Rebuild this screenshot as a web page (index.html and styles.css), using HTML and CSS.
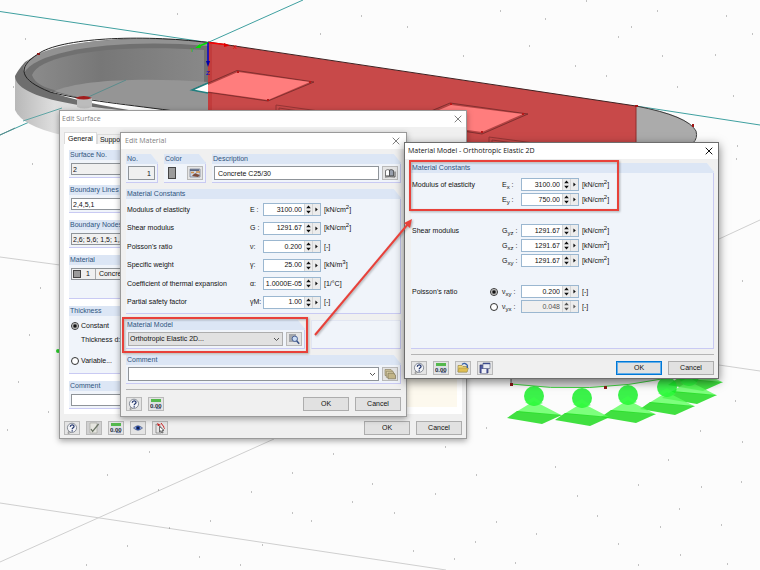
FILE: index.html
```html
<!DOCTYPE html>
<html lang="en">
<head>
    <meta charset="UTF-8">
    <meta name="viewport" content="width=device-width, initial-scale=1.0">
    <title>Material Model - Orthotropic Elastic 2D</title>
    <link rel="stylesheet" href="styles.css">
</head>
<body>
    <!-- shared icons -->
    <svg class="defs" aria-hidden="true">
        <defs>
            <symbol id="i-close" viewBox="0 0 8 8"><path d="M.7.7l6.6 6.6M7.3.7L.7 7.3" fill="none" stroke="currentColor"/></symbol>
            <symbol id="i-help" viewBox="0 0 12 12">
                <path d="M2.6 9.2L2 11.4l2.8-1" fill="#fff" stroke="#555" stroke-width=".6"/>
                <circle cx="6" cy="5.8" r="4.6" fill="#f4f5f8" stroke="#7d838e" stroke-width=".9"/>
                <path d="M4.3 4.7C4.3 2.3 8 2.4 8 4.5 8 5.9 6.2 5.8 6.2 7.3M6.2 8.2v1.2" fill="none" stroke="#26386e" stroke-width="1.3"/>
            </symbol>
            <symbol id="i-units" viewBox="0 0 12 12">
                <path d="M1 1h10v3H1z" fill="#55b84d"/>
                <path d="M1 4h10v7H1z" fill="#dcdfe4"/>
                <text x="0" y="9.6" font-size="6" font-weight="bold" fill="#222c3a">0.00</text>
                <path d="M6 10.6h5" stroke="#5a6a9a" stroke-width=".8"/>
            </symbol>
            <symbol id="i-edit" viewBox="0 0 12 12">
                <path d="M2 1h7v10H2z" fill="#e6e6e0" stroke="#a2a29a" stroke-width=".6"/>
                <path d="M3 7l1.6 2.4L10.6 2" fill="none" stroke="#6c7566" stroke-width="1.3"/>
            </symbol>
            <symbol id="i-eye" viewBox="0 0 12 12">
                <path d="M1.5 6Q6 1.6 10.500 6 6 10.4 1.5 6z" fill="#8ea3d4" stroke="#4a5a80" stroke-width=".7"/>
                <circle cx="6" cy="6" r="2.2" fill="#27459a"/><circle cx="6" cy="6" r="1.1" fill="#0b1430"/>
            </symbol>
            <symbol id="i-pick" viewBox="0 0 12 12">
                <path d="M2 2v9h5V5z" fill="#e6e6e6" stroke="#777" stroke-width=".7"/>
                <path d="M3 1l4 2-3 1z" fill="#c22"/>
                <path d="M5.5 4.5V10l1.4-1.3 1 2.3 1.2-.5-1-2.2h1.9z" fill="#fff" stroke="#333" stroke-width=".7"/>
                <path d="M7 1l3 4M9.5 5.5l1.5 1" stroke="#c22"/>
            </symbol>
            <symbol id="i-palette" viewBox="0 0 12 12">
                <path d="M1 2h10v8H1z" fill="#cdd5e2" stroke="#70798c" stroke-width=".7"/>
                <path d="M1 2.2h9v1.8H1z" fill="#5a6682"/>
                <path d="M2 5.5h3M7 5h4" stroke="#d0914c" stroke-width="1.4"/>
                <path d="M3 9q3-4 5-2l3 1-2 2z" fill="#7d4c3a"/>
            </symbol>
            <symbol id="i-book" viewBox="0 0 12 12">
                <path d="M1.5 9V3.5q2-1.5 4-.5v6q-2-.7-4 0z" fill="#fdfdfd" stroke="#555" stroke-width=".8"/>
                <path d="M5.5 3q2-1 4 .5V9q-2-.7-4 0z" fill="#9aa1ae" stroke="#444" stroke-width=".8"/>
                <path d="M1 10l4.500-.3 5.500.3V4.500" fill="none" stroke="#555"/>
            </symbol>
            <symbol id="i-lens" viewBox="0 0 12 12">
                <path d="M1 1h7v8H1z" fill="#a3a6ab"/>
                <circle cx="6.8" cy="5.8" r="2.7" fill="#c9dcf5" stroke="#4a6296"/>
                <path d="M8.6 7.8l2.6 3" stroke="#3b5488" stroke-width="1.6"/>
            </symbol>
            <symbol id="i-stack" viewBox="0 0 12 12">
                <path d="M1 1.5h6l2 2v4H1z" fill="#cfc39a" stroke="#83795a" stroke-width=".6"/>
                <path d="M2.3 3.3h6l2 2v4h-8z" fill="#d9cea6" stroke="#83795a" stroke-width=".6"/>
                <path d="M4 5.2h5.5l2 2v3.6H4z" fill="#c2b588" stroke="#6f664a" stroke-width=".6"/>
            </symbol>
            <symbol id="i-open" viewBox="0 0 12 12">
                <path d="M1 10V3.5h4l1 1h4V10z" fill="#f1d876" stroke="#9a8848" stroke-width=".7"/>
                <path d="M2 6h9.4L10 10H1z" fill="#e0bf52" stroke="#9a8848" stroke-width=".5"/>
                <path d="M5 2.6Q8 0 10.4 3.4V6" fill="none" stroke="#3963a8" stroke-width="1.3"/>
            </symbol>
            <symbol id="i-save" viewBox="0 0 12 12">
                <path d="M1 3h8v8H1z" fill="#4f5aa0" stroke="#2e3568" stroke-width=".7"/>
                <path d="M2.6 7h4.8v4H2.6z" fill="#f0f0f5"/>
                <path d="M4 1h7v5.5H4z" fill="#e8ebf3" stroke="#66708c" stroke-width=".7"/>
                <path d="M4 1.6h7" stroke="#3b4a8c" stroke-width="1.2"/>
            </symbol>
            <symbol id="i-spin" viewBox="0 0 7 11"><path d="M3.5 1.4L5.8 4.2H1.2zM3.5 9.6L5.8 6.8H1.2z" fill="currentColor"/></symbol>
            <symbol id="i-more" viewBox="0 0 7 11"><path d="M2.4 3.400L4.800 5.500 2.400 7.600z" fill="currentColor"/></symbol>
            <symbol id="support" viewBox="-30 -12 60 42" overflow="visible">
                <path d="M0 5L-18 16 28 19.5z" fill="#5cff5c" opacity=".8"/>
                <path d="M-27 22L-17 15 28 19 8 28z" fill="#1edb1e" opacity=".85"/>
                <circle r="10" fill="#19f02a" opacity=".85"/>
                <path d="M-9 6L0 1l9 6Q0 13-9 6z" fill="#3bff46" opacity=".6"/>
            </symbol>
        </defs>
    </svg>

    <main class="desktop">
        <!-- 3D model view -->
        <svg class="scene" viewBox="0 0 760 570" preserveAspectRatio="xMinYMin slice" role="img" aria-label="Tank model">
            <defs>
                <linearGradient id="wall" x1="0" x2="1"><stop offset="0" stop-color="#b8b8b8"/><stop offset=".2" stop-color="#dedede"/><stop offset="1" stop-color="#c8c8c8"/></linearGradient>
                <linearGradient id="inner" x1="0" x2="1"><stop offset="0" stop-color="#8b8b8b"/><stop offset=".4" stop-color="#777"/><stop offset="1" stop-color="#888"/></linearGradient>
            </defs>
            <g stroke="#cfcfcf" fill="none">
                <path d="M0 257l60 8M0 503l446 67M0 562l274-123M719 239l41-19M719 365l41 6"/>
            </g>
            <path d="M177 14h1M25 39h1M32 164h1M40 288h1M29 335h1M48 412h1M7 430h1M18 382h1M13 87h1M361 16h1M320 34h1M407 27h1M463 56h1M500 11h1M545 19h1M529 46h1M575 66h1M586 1h1M631 27h1M677 87h1M618 37h1M606 76h1M726 16h1M657 11h1M715 55h1M752 34h1M662 56h1M733 96h1M737 146h1M736 159h1M742 281h1M735 401h1M149 452h1M158 490h1M107 475h1M292 473h1M445 447h1M333 454h1M251 492h1M210 521h1M169 528h1M127 546h1M199 557h1M86 565h1M262 545h1M240 565h1M352 502h1M311 521h1M292 513h1M476 475h1M435 494h1M394 513h1M372 484h1M496 522h1M475 542h1M536 534h1M413 551h1M454 559h1M515 563h1M555 467h1M577 496h1M597 516h1M638 485h1M679 509h1M701 487h1M721 525h1M742 442h1M741 482h1M618 544h1M660 527h1M638 565h1M680 555h1M727 564h1M668 460h1M700 431h1M486 428h1" stroke="#888"/>
            <path d="M0 11.5L208 42.5 303 0M208 42.5L0 135M636 106l124 19" fill="none" stroke="#3fa0a0"/>

            <!-- tank -->
            <path d="M15 76V110Q22 126 62 135L210 135V100z" fill="url(#wall)"/>
            <path d="M15 76Q18 70 25 62C60 40 130 34 208 42V112H150C80 108 16 98 15 76z" fill="#6e6e6e"/>
            <path d="M23 70C27 42 122 34 208 42V50C140 41 55 46 28 76z" fill="#929292"/>
            <path d="M24 73C36 50 120 38 208 46V90L60 93Q28 86 24 73z" fill="#707070"/>
            <path d="M32 75C40 55 110 44 204 50V86L60 91Q36 87 32 75z" fill="url(#inner)"/>
            <path d="M54 91C80 80 140 77 208 82V113H170Q100 104 54 91z" fill="#959595"/>
            <path d="M48 91L75 97Q130 105 185 113H148Q80 103 48 91z" fill="#fff"/>
            <path d="M0 135L15 128M86 98l40-18" stroke="#5b8c8c"/>
            <path d="M23 121L62 108" stroke="#5fa5a5"/>
            <path d="M208 42.5C140 34 60 38 38 54 16 68 20 80 50 92 80 100 130 105 182 112" fill="none" stroke="#222"/>
            <path d="M77 98v9q7 3 15 0v-9z" fill="#bcbcbc"/>
            <path d="M75 98q9-4 17 0-8 3-17 0z" fill="#a11d1d"/>
            <path d="M37 53h3v2h-3z" fill="#8c1818"/>

            <!-- selected surface -->
            <path d="M208 42L636 106V160H208z" fill="#c84949"/>
            <path d="M208 42L212 43V111H208z" fill="#c23c3c"/>
            <path d="M208 42L636 106" stroke="#3f2222"/>
            <path d="M636 106Q690 115 696 132 697 138 693 143H636z" fill="#ababab"/>
            <path d="M636 106Q688 116 696 131 698 138 693 143" fill="none" stroke="#3c3c3c"/>
            <path d="M636 106v37" stroke="#8e2f2f"/>
            <path d="M635 105h3v2h-3zM692 124h2v3h-2z" fill="#a01515"/>
            <path d="M192 90L237 70.5 314 82 268 101z" fill="#b54444" stroke="#742a2a" stroke-width=".8"/>
            <path d="M208 85L238 72 310 82 268 100 208 91.5z" fill="#ff7d7d"/>
            <path d="M208 83L192 90l16 3" fill="#fff" stroke="#208080" stroke-width="1.5"/>
            <path d="M405 122L450 103 528 114 482 134z" fill="#b54444" stroke="#742a2a" stroke-width=".8"/>
            <path d="M410 122L451 105 523 114 482 132z" fill="#ff7d7d"/>
            <path d="M237 71h2v2h-2zM309 81h2v2h-2zM267 99h2v2h-2zM450 103h2v2h-2zM522 113h2v2h-2zM481 131h2v2h-2z" fill="#b81818"/>
            <path d="M276 111v-6l50 7M279 111v-3l26 4M489 143v-6l45 6M492 143v-3l22 3" fill="none" stroke="#963636"/>

            <!-- axes -->
            <path d="M208 42.5l17 2" stroke="red" stroke-width="1.5"/><path d="M224 43l6 2.5-6 1.5z" fill="#d00"/>
            <path d="M208 42.5l-10 4" stroke="#0d0" stroke-width="1.5"/><path d="M195 48l5-4 1 4z" fill="#0d0"/>
            <path d="M208 42.5v20" stroke="#00c" stroke-width="1.5"/><path d="M206 61h4l-2 6z" fill="#00a"/>
            <g font-size="6"><text x="233" y="49" fill="#e00">X</text><text x="190" y="52" fill="#0c0">Y</text><text x="206" y="75" fill="#00c">Z</text></g>

            <!-- far end and supports -->
            <path d="M511 370V384Q590 394 668 378z" fill="#dadada"/>
            <path d="M511 384Q590 394 668 378" fill="none" stroke="#3fd23f"/>
            <path d="M511 378v6" stroke="#555"/>
            <path d="M510 383h3v3h-3zM604 386h3v3h-3z" fill="#8c1818"/>
            <use href="#support" x="665" y="351" width="60" height="42"/>
            <use href="#support" x="659" y="364" width="60" height="42"/>
            <use href="#support" x="637" y="375" width="60" height="42"/>
            <use href="#support" x="598" y="383" width="60" height="42"/>
            <use href="#support" x="552" y="386" width="60" height="42"/>
            <use href="#support" x="504" y="384" width="60" height="42"/>
            <circle cx="58" cy="351" r="2" fill="#2ad42a"/>
        </svg>

        <section class="window surface" aria-label="Edit Surface">
            <header class="titlebar inactive">
                <h2>Edit Surface</h2>
                <button type="button" aria-label="Close"><svg><use href="#i-close"/></svg></button>
            </header>
            <div class="content">
                <div class="tabs" role="tablist">
                    <button type="button" role="tab" class="tab active" aria-selected="true">General</button>
                    <button type="button" role="tab" class="tab" aria-selected="false">Support</button>
                </div>
                <div class="tab-panel">
                    <div class="column">
                        <div class="group">
                            <h3><label for="surface-no">Surface No.</label></h3>
                            <div class="group-body"><input class="box readonly" id="surface-no" value="2" readonly></div>
                        </div>
                        <div class="group">
                            <h3><label for="lines">Boundary Lines No.</label></h3>
                            <div class="group-body"><input class="box" id="lines" value="2,4,5,1"></div>
                        </div>
                        <div class="group">
                            <h3><label for="nodes">Boundary Nodes No.</label></h3>
                            <div class="group-body"><input class="box readonly" id="nodes" value="2,6; 5,6; 1,5; 1,2" readonly></div>
                        </div>
                        <div class="group material">
                            <h3>Material</h3>
                            <div class="group-body">
                                <div class="box readonly material-box"><span class="swatch"></span><span>1</span><span class="mat-name">Concrete C25/30</span></div>
                            </div>
                        </div>
                        <div class="group thickness">
                            <h3>Thickness</h3>
                            <div class="group-body">
                                <label class="choice"><input type="radio" name="thickness" checked>Constant</label>
                                <span class="indent">Thickness d:</span>
                                <label class="choice"><input type="radio" name="thickness">Variable...</label>
                            </div>
                        </div>
                        <div class="group">
                            <h3><label for="surface-comment">Comment</label></h3>
                            <div class="group-body"><input class="box" id="surface-comment"></div>
                        </div>
                    </div>
                    <div class="preview"></div>
                </div>
                <footer class="toolbar">
                    <button type="button" class="icon-btn" aria-label="Help"><svg><use href="#i-help"/></svg></button>
                    <button type="button" class="icon-btn pressed" aria-label="Edit"><svg><use href="#i-edit"/></svg></button>
                    <button type="button" class="icon-btn" aria-label="Units"><svg><use href="#i-units"/></svg></button>
                    <button type="button" class="icon-btn" aria-label="View"><svg><use href="#i-eye"/></svg></button>
                    <button type="button" class="icon-btn" aria-label="Pick"><svg><use href="#i-pick"/></svg></button>
                    <span class="spacer"></span>
                    <button type="button" class="btn">OK</button>
                    <button type="button" class="btn">Cancel</button>
                </footer>
            </div>
        </section>

        <section class="window edit-material" aria-label="Edit Material">
            <header class="titlebar inactive">
                <h2>Edit Material</h2>
                <button type="button" aria-label="Close"><svg><use href="#i-close"/></svg></button>
            </header>
            <div class="content">
                <div class="group-row">
                    <div class="group no">
                        <h3><label for="mat-no">No.</label></h3>
                        <div class="group-body"><input class="box readonly right" id="mat-no" value="1" readonly></div>
                    </div>
                    <div class="group color">
                        <h3>Color</h3>
                        <div class="group-body"><span class="swatch tall"></span><button type="button" class="icon-btn" aria-label="Choose color"><svg><use href="#i-palette"/></svg></button></div>
                    </div>
                    <div class="group grow">
                        <h3><label for="desc">Description</label></h3>
                        <div class="group-body"><input class="box" id="desc" value="Concrete C25/30"><button type="button" class="icon-btn" aria-label="Library"><svg><use href="#i-book"/></svg></button></div>
                    </div>
                </div>

                <div class="group constants">
                    <h3>Material Constants</h3>
                    <div class="rows">
                        <div class="row">
                            <label for="e">Modulus of elasticity</label><span>E :</span>
                            <div class="spinner"><input id="e" value="3100.00"><button type="button" aria-label="Step"><svg><use href="#i-spin"/></svg></button><button type="button" aria-label="More"><svg><use href="#i-more"/></svg></button></div>
                            <span>[kN/cm<sup>2</sup>]</span>
                        </div>
                        <div class="row">
                            <label for="g">Shear modulus</label><span>G :</span>
                            <div class="spinner"><input id="g" value="1291.67"><button type="button" aria-label="Step"><svg><use href="#i-spin"/></svg></button><button type="button" aria-label="More"><svg><use href="#i-more"/></svg></button></div>
                            <span>[kN/cm<sup>2</sup>]</span>
                        </div>
                        <div class="row">
                            <label for="nu">Poisson's ratio</label><span>ν:</span>
                            <div class="spinner"><input id="nu" value="0.200"><button type="button" aria-label="Step"><svg><use href="#i-spin"/></svg></button><button type="button" aria-label="More"><svg><use href="#i-more"/></svg></button></div>
                            <span>[-]</span>
                        </div>
                        <div class="row">
                            <label for="gamma">Specific weight</label><span>γ:</span>
                            <div class="spinner"><input id="gamma" value="25.00"><button type="button" aria-label="Step"><svg><use href="#i-spin"/></svg></button><button type="button" aria-label="More"><svg><use href="#i-more"/></svg></button></div>
                            <span>[kN/m<sup>3</sup>]</span>
                        </div>
                        <div class="row">
                            <label for="alpha">Coefficient of thermal expansion</label><span>α:</span>
                            <div class="spinner"><input id="alpha" value="1.0000E-05"><button type="button" aria-label="Step"><svg><use href="#i-spin"/></svg></button><button type="button" aria-label="More"><svg><use href="#i-more"/></svg></button></div>
                            <span>[1/°C]</span>
                        </div>
                        <div class="row">
                            <label for="gamma-m">Partial safety factor</label><span>γM:</span>
                            <div class="spinner"><input id="gamma-m" value="1.00"><button type="button" aria-label="Step"><svg><use href="#i-spin"/></svg></button><button type="button" aria-label="More"><svg><use href="#i-more"/></svg></button></div>
                            <span>[-]</span>
                        </div>
                    </div>
                </div>

                <div class="group-row">
                    <div class="group model-group">
                        <h3><label for="model">Material Model</label></h3>
                        <div class="group-body">
                            <select class="box gray" id="model"><option>Orthotropic Elastic 2D...</option></select>
                            <button type="button" class="icon-btn" aria-label="Details"><svg><use href="#i-lens"/></svg></button>
                        </div>
                    </div>
                    <div class="group plain grow"></div>
                </div>

                <div class="group">
                    <h3><label for="comment">Comment</label></h3>
                    <div class="group-body">
                        <select class="box" id="comment"><option></option></select>
                        <button type="button" class="icon-btn" aria-label="Comments"><svg><use href="#i-stack"/></svg></button>
                    </div>
                </div>

                <footer class="toolbar ruled">
                    <button type="button" class="icon-btn" aria-label="Help"><svg><use href="#i-help"/></svg></button>
                    <button type="button" class="icon-btn" aria-label="Units"><svg><use href="#i-units"/></svg></button>
                    <span class="spacer"></span>
                    <button type="button" class="btn">OK</button>
                    <button type="button" class="btn">Cancel</button>
                </footer>
            </div>
        </section>

        <section class="window material-model" aria-label="Material Model">
            <header class="titlebar">
                <h2>Material Model - Orthotropic Elastic 2D</h2>
                <button type="button" aria-label="Close"><svg><use href="#i-close"/></svg></button>
            </header>
            <div class="content">
                <div class="group ortho">
                    <h3>Material Constants</h3>
                    <div class="sets">
                        <div class="set">
                            <div class="row">
                                <span>Modulus of elasticity</span><span></span><label for="ex">E<sub>x</sub> :</label>
                                <div class="spinner"><input id="ex" value="3100.00"><button type="button" aria-label="Step"><svg><use href="#i-spin"/></svg></button><button type="button" aria-label="More"><svg><use href="#i-more"/></svg></button></div>
                                <span>[kN/cm<sup>2</sup>]</span>
                            </div>
                            <div class="row">
                                <span></span><span></span><label for="ey">E<sub>y</sub> :</label>
                                <div class="spinner"><input id="ey" value="750.00"><button type="button" aria-label="Step"><svg><use href="#i-spin"/></svg></button><button type="button" aria-label="More"><svg><use href="#i-more"/></svg></button></div>
                                <span>[kN/cm<sup>2</sup>]</span>
                            </div>
                        </div>
                        <div class="set">
                            <div class="row">
                                <span>Shear modulus</span><span></span><label for="gyz">G<sub>yz</sub> :</label>
                                <div class="spinner"><input id="gyz" value="1291.67"><button type="button" aria-label="Step"><svg><use href="#i-spin"/></svg></button><button type="button" aria-label="More"><svg><use href="#i-more"/></svg></button></div>
                                <span>[kN/cm<sup>2</sup>]</span>
                            </div>
                            <div class="row">
                                <span></span><span></span><label for="gxz">G<sub>xz</sub> :</label>
                                <div class="spinner"><input id="gxz" value="1291.67"><button type="button" aria-label="Step"><svg><use href="#i-spin"/></svg></button><button type="button" aria-label="More"><svg><use href="#i-more"/></svg></button></div>
                                <span>[kN/cm<sup>2</sup>]</span>
                            </div>
                            <div class="row">
                                <span></span><span></span><label for="gxy">G<sub>xy</sub> :</label>
                                <div class="spinner"><input id="gxy" value="1291.67"><button type="button" aria-label="Step"><svg><use href="#i-spin"/></svg></button><button type="button" aria-label="More"><svg><use href="#i-more"/></svg></button></div>
                                <span>[kN/cm<sup>2</sup>]</span>
                            </div>
                        </div>
                        <div class="set">
                            <div class="row">
                                <span>Poisson's ratio</span><input type="radio" name="poisson" id="r-xy" checked><label for="r-xy">ν<sub>xy</sub> :</label>
                                <div class="spinner"><input aria-label="Poisson's ratio xy" value="0.200"><button type="button" aria-label="Step"><svg><use href="#i-spin"/></svg></button><button type="button" aria-label="More"><svg><use href="#i-more"/></svg></button></div>
                                <span>[-]</span>
                            </div>
                            <div class="row">
                                <span></span><input type="radio" name="poisson" id="r-yx"><label for="r-yx">ν<sub>yx</sub> :</label>
                                <div class="spinner off"><input aria-label="Poisson's ratio yx" value="0.048" readonly><button type="button" aria-label="Step"><svg><use href="#i-spin"/></svg></button><button type="button" aria-label="More"><svg><use href="#i-more"/></svg></button></div>
                                <span>[-]</span>
                            </div>
                        </div>
                    </div>
                </div>
                <footer class="toolbar ruled">
                    <button type="button" class="icon-btn" aria-label="Help"><svg><use href="#i-help"/></svg></button>
                    <button type="button" class="icon-btn" aria-label="Units"><svg><use href="#i-units"/></svg></button>
                    <button type="button" class="icon-btn" aria-label="Open"><svg><use href="#i-open"/></svg></button>
                    <button type="button" class="icon-btn" aria-label="Save"><svg><use href="#i-save"/></svg></button>
                    <span class="spacer"></span>
                    <button type="button" class="btn default">OK</button>
                    <button type="button" class="btn">Cancel</button>
                </footer>
            </div>
        </section>

        <!-- red callouts -->
        <svg class="callouts" aria-hidden="true">
            <g fill="none" stroke="#e8413a" stroke-width="2">
                <rect x="123" y="318" width="184" height="34"/>
                <rect x="410" y="161" width="208" height="49"/>
                <path d="M315 335L408 224"/>
            </g>
            <path d="M412 219l-2 9-6-5z" fill="#e8413a"/>
        </svg>
    </main>
</body>
</html>
```
FILE: styles.css
```css
* {
    box-sizing: border-box;
}
body {
    margin: 0;
    background: #fcfcfc;
    font-family: "Liberation Sans", Arial, sans-serif;
    font-size: 7px;
    line-height: 10px;
    color: #111;
}
button, input, select {
    margin: 0;
    padding: 0;
    border: none;
    font: inherit;
    color: inherit;
}
h2, h3 {
    margin: 0;
    font-size: inherit;
    font-weight: normal;
}
svg {
    display: block;
}
.defs {
    position: absolute;
    width: 0;
    height: 0;
}
.desktop {
    position: relative;
    height: 100vh;
    overflow: hidden;
}
.scene, .callouts {
    position: absolute;
    top: 0;
    left: 0;
    width: 100%;
    height: 100%;
}
.callouts {
    pointer-events: none;
    filter: drop-shadow(1px 1px 1px rgba(0, 0, 0, 0.3));
}

/* windows */
.window {
    position: absolute;
    background: #f0f0f0;
    border: 1px solid #9a9a9a;
    box-shadow: 0 2px 6px rgba(0, 0, 0, 0.35);
}
.surface {
    left: 59px;
    top: 110px;
    width: 408px;
}
.edit-material {
    left: 120px;
    top: 132px;
    width: 287px;
}
.material-model {
    left: 404px;
    top: 142px;
    width: 315px;
    border-color: #6e6e6e;
    box-shadow: 0 3px 9px rgba(0, 0, 0, 0.5);
}
.titlebar {
    display: flex;
    align-items: center;
    justify-content: space-between;
    height: 16px;
    padding: 0 4px 0 2px;
    background: #fff;
    font-family: "Open Sans", "Noto Sans", sans-serif;
}
.edit-material .titlebar {
    padding: 0 6px 0 4px;
}
.material-model .titlebar {
    padding: 0 5px 0 3px;
}
.titlebar.inactive {
    color: #808080;
}
.titlebar button {
    background: none;
}
.titlebar svg {
    width: 8px;
    height: 8px;
}
.content {
    padding: 5px 4px 3px;
}
.edit-material .content {
    display: flex;
    flex-direction: column;
    gap: 6px;
    padding: 5px;
}
.material-model .content {
    padding: 4px 4px 3px 6px;
}

/* groups */
.group {
    background: #f0f4fa;
    border-right: 1px solid #c9caf3;
    border-bottom: 1px solid #c9caf3;
    clip-path: polygon(0 0, calc(100% - 7px) 0, 100% 9px, 100% 100%, 0 100%);
}
.group h3 {
    height: 10px;
    margin-right: -1px;
    padding-left: 1px;
    background: #dce6f5;
    color: #2f547e;
}
.group-body {
    display: flex;
    align-items: center;
    gap: 3px;
    padding: 2px;
}
.group.plain {
    clip-path: none;
    border-top: 1px solid #e2e6f2;
    border-left: 1px solid #e2e6f2;
}
.group-row {
    display: flex;
    gap: 6px;
}
.grow {
    flex: 1;
}
.no {
    width: 32px;
}
.color {
    width: 42px;
}
.color .group-body {
    justify-content: space-between;
}
.model-group {
    width: 179px;
}
.box {
    flex: 1;
    min-width: 0;
    width: 100%;
    height: 14px;
    padding: 0 3px;
    background: #fff;
    border: 1px solid #8f9499;
    border-radius: 0;
}
.box.readonly {
    background: #f0f0f0;
}
.right {
    text-align: right;
}
select.box {
    appearance: none;
    padding: 0 1px;
    background: #fff url("data:image/svg+xml,%3Csvg xmlns='http://www.w3.org/2000/svg' width='7' height='5'%3E%3Cpath d='M1 1l2.5 2.5L6 1' fill='none' stroke='%23555'/%3E%3C/svg%3E") no-repeat right 2px center;
}
select.box.gray {
    background-color: #e1e1e1;
    border-color: #adadad;
}
.swatch {
    width: 8px;
    height: 8px;
    background: #9b9b9b;
    border: 1px solid #444;
}
.swatch.tall {
    height: 12px;
    margin-left: 2px;
}

/* edit surface */
.tabs {
    display: flex;
    align-items: flex-end;
}
.tab {
    height: 10px;
    padding: 0 2px;
    background: #f0f0f0;
    border: 1px solid #dcdcdc;
    border-bottom: none;
}
.tab.active {
    height: 12px;
    padding: 0 3px;
    background: #fff;
}
.tab-panel {
    display: flex;
    gap: 8px;
    padding: 6px 5px 5px;
    background: #fff;
}
.column {
    display: flex;
    flex: 1;
    flex-direction: column;
    gap: 7px;
}
.surface .group-body {
    padding-top: 3px;
}
.surface .box {
    height: 12px;
    padding: 0 1px;
}
.material {
    min-height: 44px;
}
.material-box {
    display: flex;
    align-items: center;
    gap: 5px;
}
.mat-name {
    padding-left: 3px;
    border-left: 1px solid #aaa;
}
.thickness {
    min-height: 68px;
}
.thickness .group-body {
    flex-direction: column;
    align-items: flex-start;
    padding-top: 5px;
}
.choice {
    display: flex;
    align-items: center;
    gap: 2px;
}
.indent {
    padding-left: 10px;
    margin: 1px 0 8px;
}
.preview {
    flex: 1;
    margin-bottom: 2px;
    background: #fdf9ee;
}

/* rows of values */
.rows {
    display: flex;
    flex-direction: column;
    justify-content: space-between;
    min-height: 114px;
    padding: 4px 0 4px 1px;
}
.row {
    display: grid;
    grid-template-columns: 123px 13px 58px 1fr;
    align-items: center;
    height: 13px;
    white-space: nowrap;
}
.row > :last-child {
    padding-left: 3px;
}
.ortho {
    min-height: 186px;
}
.sets {
    display: flex;
    flex-direction: column;
    gap: 18px;
    padding: 5px 0 0 1px;
}
.set {
    display: flex;
    flex-direction: column;
    gap: 2px;
}
.set .row {
    grid-template-columns: 78px 12px 19px 58px 1fr;
}
sup, sub {
    font-size: 6px;
    line-height: 0;
}
.spinner {
    display: flex;
    height: 13px;
    background: #fff;
    border: 1px solid #9bb7d0;
}
.spinner input {
    flex: 1;
    min-width: 0;
    background: none;
    text-align: right;
    margin-right: 2px;
}
.spinner button {
    width: 8px;
    background: #ececec;
    border-left: 1px solid #d4d4d4;
}
.spinner svg {
    width: 7px;
    height: 11px;
}
.spinner.off {
    background: #f0f0f0;
    color: #555;
}
input[type="radio"] {
    appearance: none;
    width: 8px;
    height: 8px;
    background: #fff;
    border: 1px solid #333;
    border-radius: 50%;
}
input[type="radio"]:checked {
    background: radial-gradient(#111 0 1px, #fff 3px);
}

/* buttons */
.toolbar {
    display: flex;
    gap: 6px;
    margin-top: 7px;
}
.toolbar.ruled {
    margin-top: 5px;
    padding-top: 6px;
    border-top: 1px solid #b5b5b5;
}
.edit-material .toolbar.ruled {
    margin-top: -1px;
    padding-top: 7px;
}
.spacer {
    flex: 1;
}
.icon-btn {
    display: flex;
    align-items: center;
    justify-content: center;
    width: 16px;
    height: 14px;
    background: #e4e4e4;
    border: 1px solid #b9b9b9;
}
.icon-btn.pressed {
    background: #d0d0d0;
}
.icon-btn svg {
    width: 12px;
    height: 12px;
}
.btn {
    width: 46px;
    height: 14px;
    background: #e1e1e1;
    border: 1px solid #adadad;
}
.btn.default {
    border: 1px solid #0078d7;
    box-shadow: inset 0 0 0 1px #64aee8;
}
```
